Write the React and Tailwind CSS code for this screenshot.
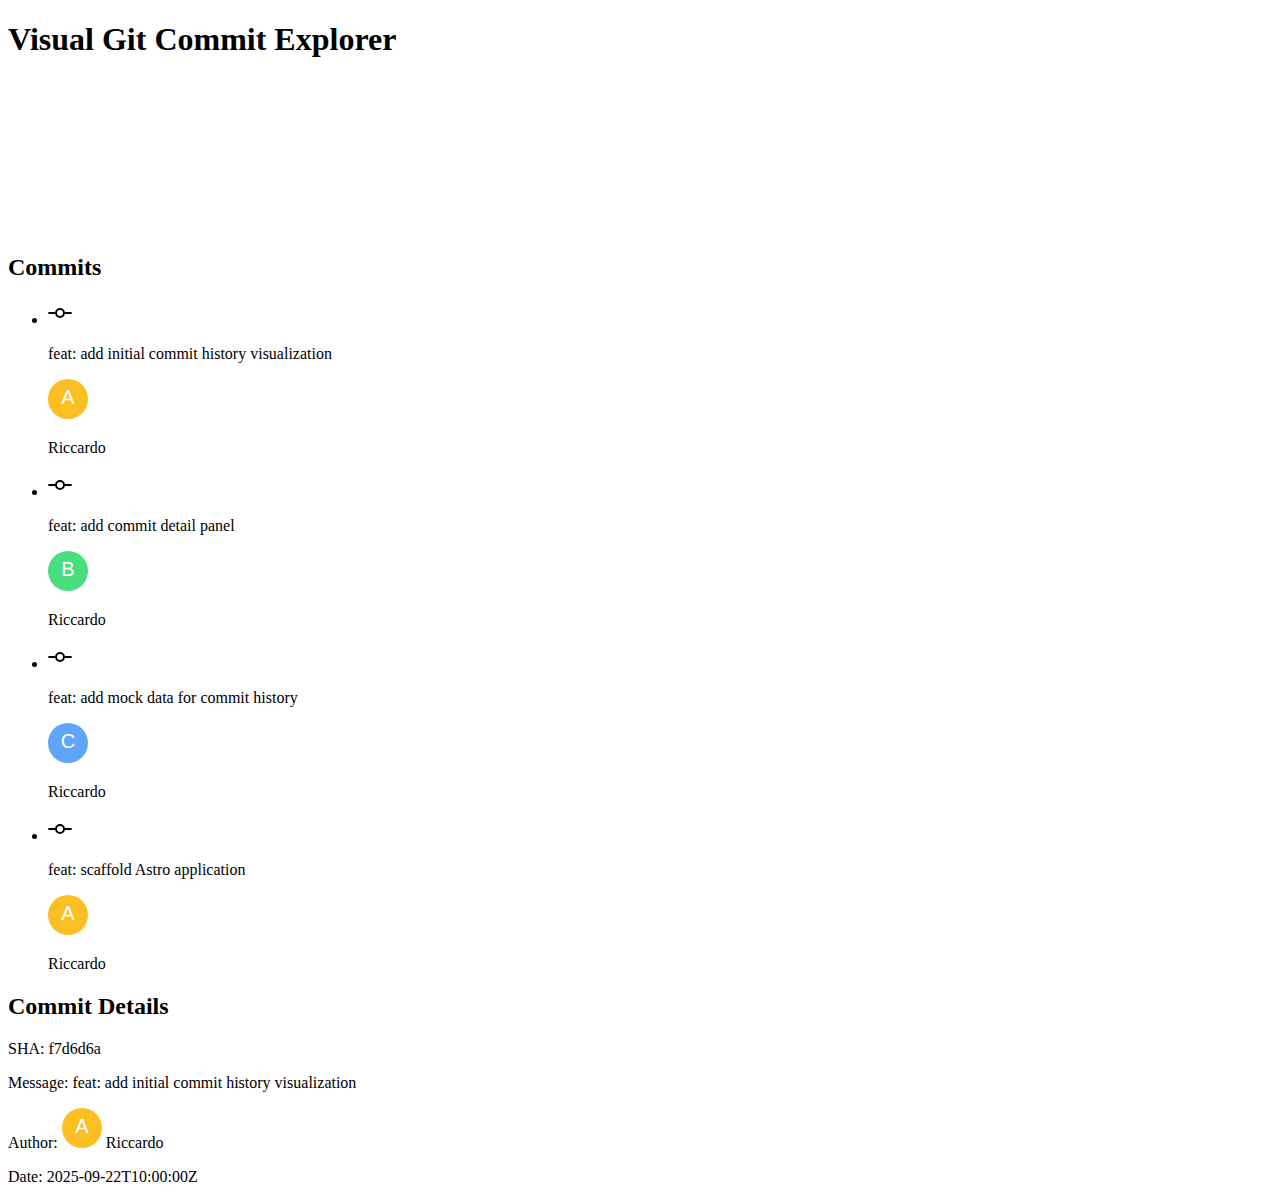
const commits = [
  { message: "feat: add initial commit history visualization", letter: "A", color: "#fbbf24" },
  { message: "feat: add commit detail panel", letter: "B", color: "#4ade80" },
  { message: "feat: add mock data for commit history", letter: "C", color: "#60a5fa" },
  { message: "feat: scaffold Astro application", letter: "A", color: "#fbbf24" },
];

function CommitIcon() {
  return (
    <svg className="inline h-6 w-6 align-baseline" viewBox="0 0 24 24" fill="none" stroke="currentColor" strokeWidth="2" strokeLinecap="round" strokeLinejoin="round">
      <circle cx="12" cy="12" r="4" />
      <line x1="1.05" y1="12" x2="7" y2="12" />
      <line x1="17.01" y1="12" x2="22.96" y2="12" />
    </svg>
  );
}

function Avatar({ letter, color }) {
  return (
    <svg className="inline h-10 w-10 align-baseline" viewBox="0 0 40 40">
      <circle cx="20" cy="20" r="20" fill={color} />
      <text x="50%" y="25" textAnchor="middle" fill="#fff" fontSize="20" fontFamily="'Liberation Sans', Arial, sans-serif">
        {letter}
      </text>
    </svg>
  );
}

export default function App() {
  return (
    <main className="px-2 pt-[21px] font-['Liberation_Serif',serif] text-base leading-[18px] text-black">
      <h1 className="text-[32px] leading-[37px] font-bold">Visual Git Commit Explorer</h1>
      <section className="mt-[195px]">
        <h2 className="text-2xl leading-7 font-bold">Commits</h2>
        <ul className="mt-5 list-disc pl-10">
          {commits.map((c, i) => (
            <li key={i} className="h-[172px]">
              <div className="h-7"><CommitIcon /></div>
              <p className="mt-4">{c.message}</p>
              <div className="mt-4 h-11"><Avatar letter={c.letter} color={c.color} /></div>
              <p className="mt-4">Riccardo</p>
            </li>
          ))}
        </ul>
      </section>
      <section className="mt-[3px]">
        <h2 className="text-2xl leading-7 font-bold">Commit Details</h2>
        <p className="mt-5">SHA: f7d6d6a</p>
        <p className="mt-4">Message: feat: add initial commit history visualization</p>
        <p className="mt-4">Author: <Avatar letter="A" color="#fbbf24" /> Riccardo</p>
        <p className="mt-4">Date: 2025-09-22T10:00:00Z</p>
      </section>
    </main>
  );
}
